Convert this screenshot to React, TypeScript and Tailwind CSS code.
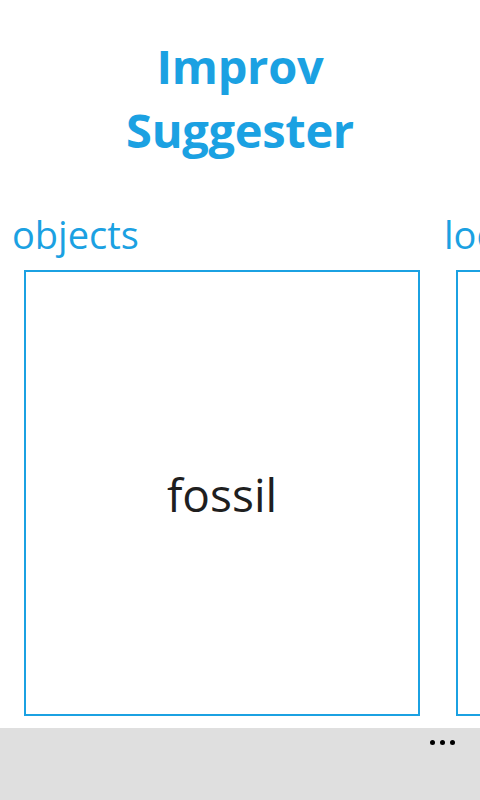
import React from 'react';

const font = { fontFamily: '"Open Sans", "Noto Sans", sans-serif' };

export default function App() {
  return (
    <div className="w-[480px] h-[800px] bg-white flex flex-col overflow-hidden" style={font}>
      {/* Title */}
      <div className="h-[200px] flex flex-col items-center pt-[34px]">
        <h1 className="text-[47px] leading-[64px] font-bold text-[#1ba1e2] text-center tracking-[-0.3px]">
          Improv
          <br />
          Suggester
        </h1>
      </div>

      {/* Pivot */}
      <div className="flex-1 flex overflow-hidden">
        <PivotItem header="objects" word="fossil" />
        <PivotItem header="locations" word="" />
      </div>

      {/* App bar */}
      <div className="h-[72px] bg-[#dfdfdf] flex justify-end items-start pr-[25px] pt-[12px] shrink-0">
        <div className="flex gap-[5px]">
          <span className="w-[5px] h-[5px] rounded-full bg-black" />
          <span className="w-[5px] h-[5px] rounded-full bg-black" />
          <span className="w-[5px] h-[5px] rounded-full bg-black" />
        </div>
      </div>
    </div>
  );
}

function PivotItem({ header, word }: { header: string; word: string }) {
  return (
    <div className="w-[432px] shrink-0 flex flex-col pl-[12px]">
      <div className="pt-[9px] text-[38px] leading-[50px] text-[#1ba1e2] whitespace-nowrap">{header}</div>
      <div className="ml-[12px] mt-[11px] w-[396px] h-[446px] border-2 border-[#1ba1e2] flex items-center justify-center">
        <span className="text-[46px] text-[#1f1f1f] pt-[2px]">{word}</span>
      </div>
    </div>
  );
}
